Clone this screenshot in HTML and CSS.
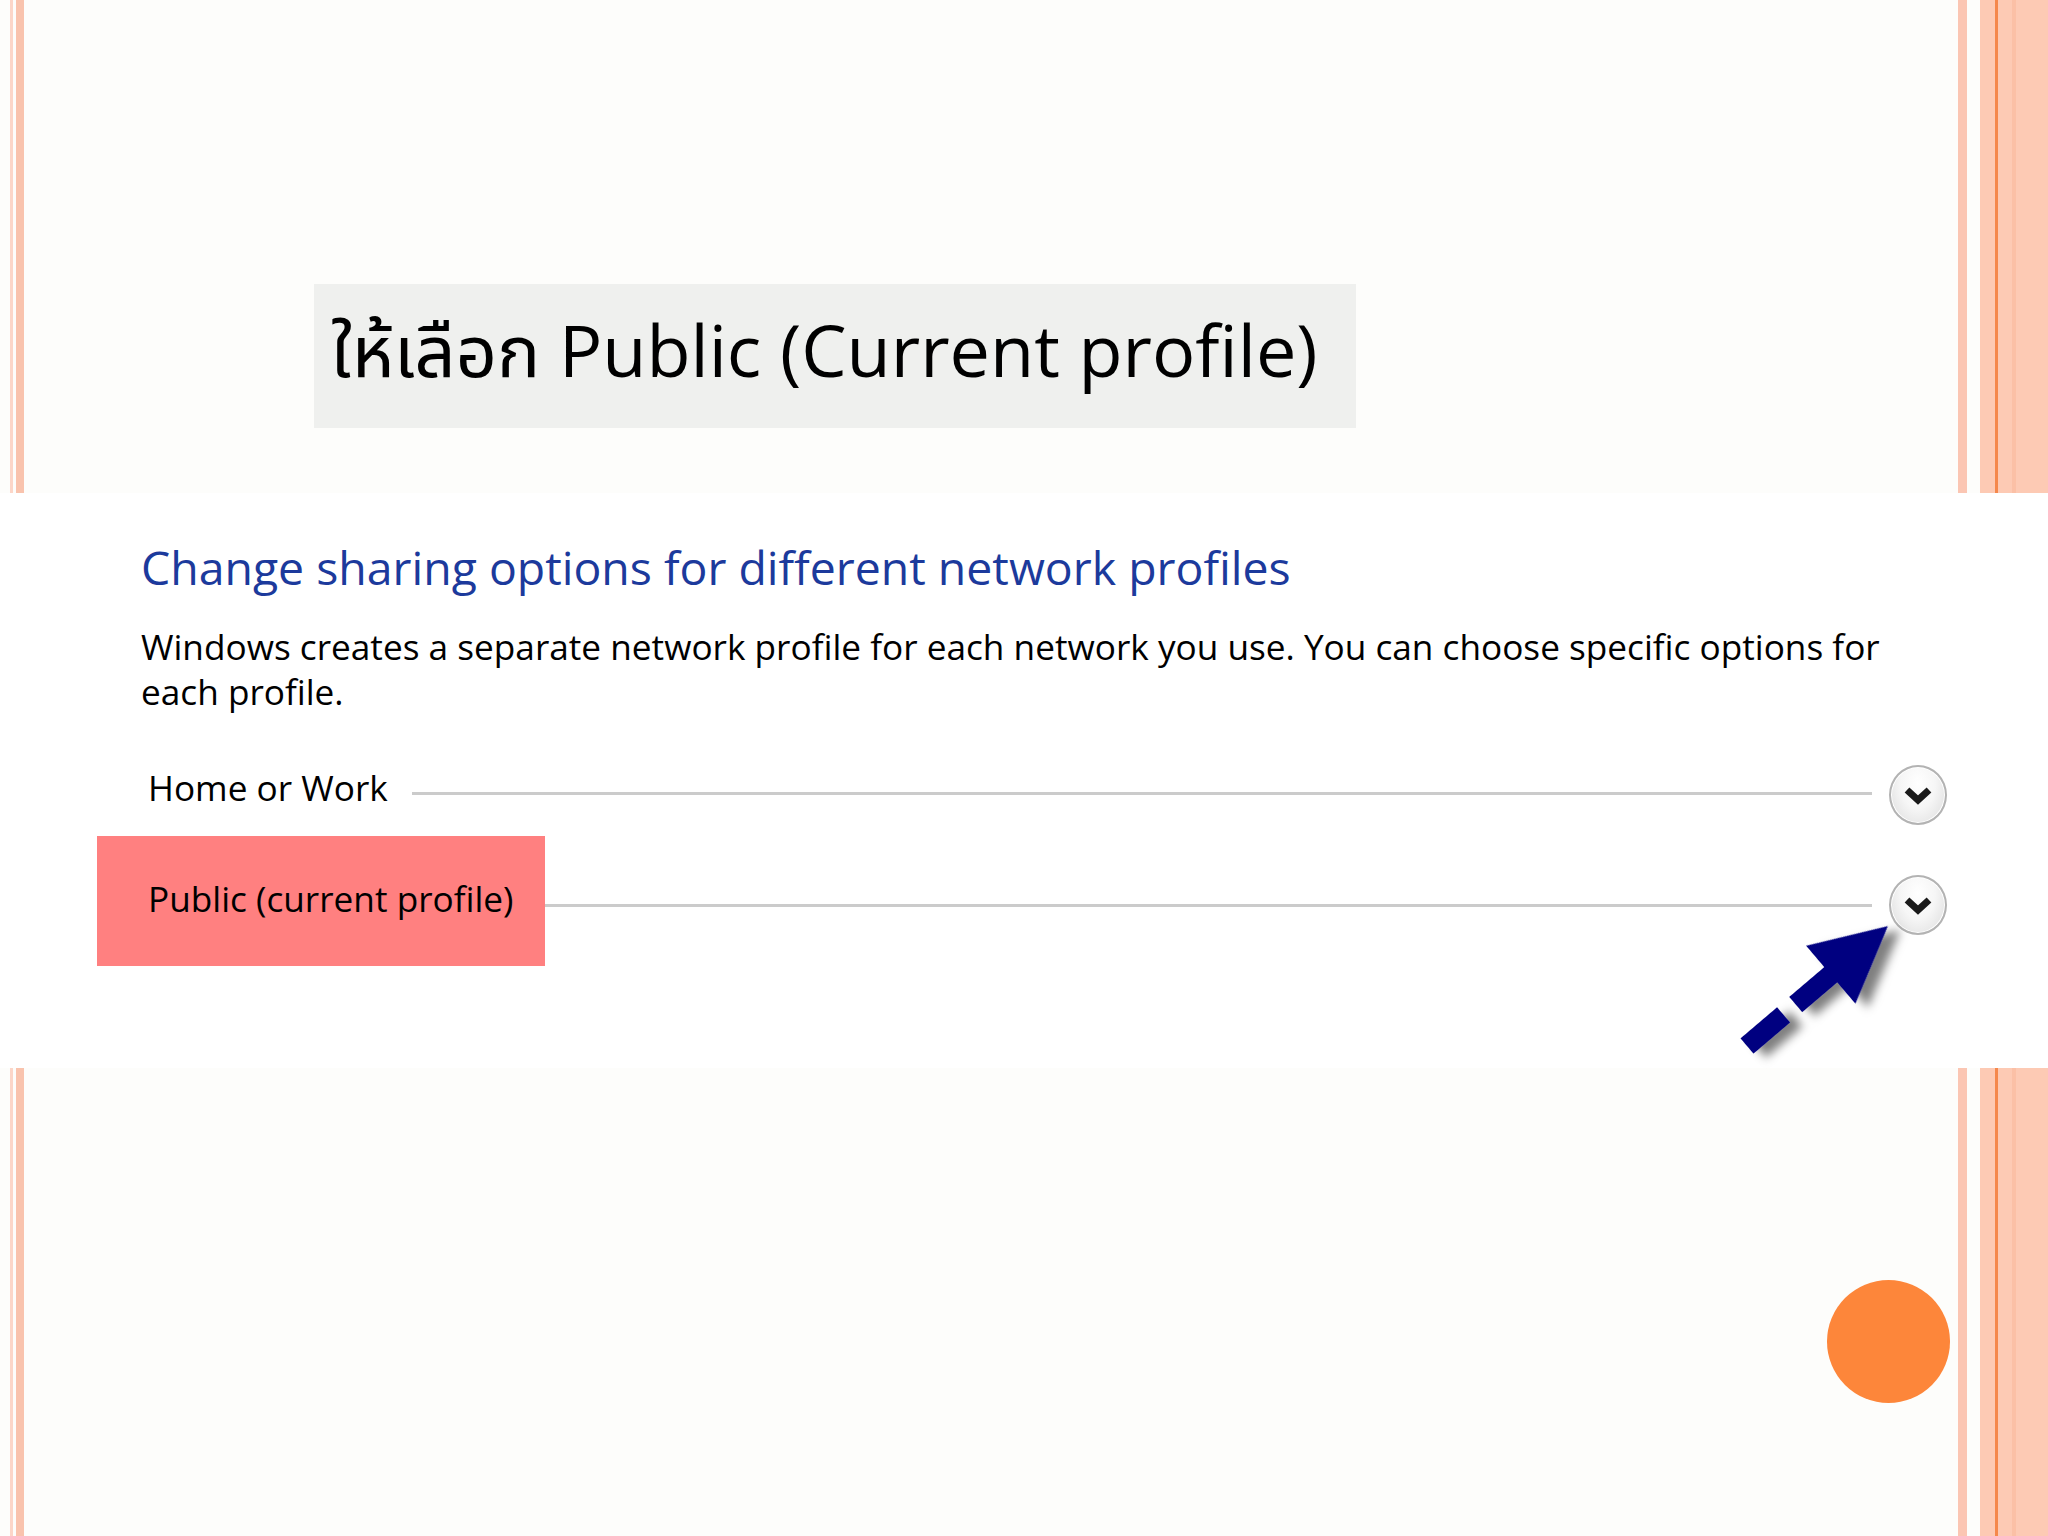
FILE: index.html
```html
<!DOCTYPE html>
<html lang="th">
<head>
<meta charset="utf-8">
<title>Public (Current profile)</title>
<link rel="stylesheet" href="styles.css">
</head>
<body>
<div class="slide">
  <header class="title-wrap">
    <div class="title-box"><h1 class="title">ให้เลือก Public (Current profile)</h1></div>
  </header>

  <section class="shot">
    <h2 class="shot-heading">Change sharing options for different network profiles</h2>
    <p class="shot-text">Windows creates a separate network profile for each network you use. You can choose specific options for<br>each profile.</p>

    <div class="profile-row row-home">
      <span class="profile-label">Home or Work</span>
      <span class="rule"></span>
      <span class="chev"><svg viewBox="0 0 28 18" width="28" height="18"><path d="M3 3 L14 13 L25 3" fill="none" stroke="#1a1a1a" stroke-width="7" stroke-linejoin="miter"/></svg></span>
    </div>

    <div class="profile-row row-public">
      <span class="profile-hl"><span class="profile-label">Public (current profile)</span></span>
      <span class="rule"></span>
      <span class="chev"><svg viewBox="0 0 28 18" width="28" height="18"><path d="M3 3 L14 13 L25 3" fill="none" stroke="#1a1a1a" stroke-width="7" stroke-linejoin="miter"/></svg></span>
    </div>

    <svg class="pointer" viewBox="0 0 210 175" width="210" height="175">
      <defs>
        <filter id="sh" x="-30%" y="-30%" width="170%" height="170%">
          <feDropShadow dx="7" dy="11" stdDeviation="5" flood-color="#000" flood-opacity="0.5"/>
        </filter>
      </defs>
      <g transform="translate(37 146) rotate(-40.4)" fill="#000080" filter="url(#sh)">
        <rect x="0" y="-10" width="48" height="20"/>
        <rect x="64" y="-10" width="52" height="20"/>
        <polygon points="110,-38 185,0 110,38"/>
      </g>
    </svg>
  </section>

  <div class="bullet"></div>
</div>
</body>
</html>
```

FILE: styles.css
```css
html, body {
  margin: 0;
  padding: 0;
}

body {
  width: 2048px;
  height: 1536px;
  overflow: hidden;
  background-color: #fdfdfb;
  background-image: linear-gradient(to right,
    transparent 10px, #fcd6c8 10px, #fcd6c8 13px, transparent 13px,
    transparent 16px, #f9c3ad 16px, #f9c3ad 24px, transparent 24px,
    transparent 1958px, #fbc6b3 1958px, #fbc6b3 1967px, transparent 1967px,
    transparent 1980px, #fdcab4 1980px, #fdcab4 1995px, #f5884c 1995px,
    #f5884c 1998px, #fdcab4 1998px, #fdcab4 2012px, #fbc0a6 2012px,
    #fbc0a6 2016px, #fdcab4 2016px);
  font-family: "Open Sans", "Noto Sans", "Noto Sans Thai", sans-serif;
}

.slide {
  display: flex;
  flex-direction: column;
  padding-top: 284px;
}

.title-wrap {
  padding-left: 314px;
}

.title-box {
  width: 1042px;
  height: 144px;
  box-sizing: border-box;
  background: #eff0ee;
  display: flex;
  align-items: center;
  padding-left: 17px;
  padding-bottom: 14px;
}

.title {
  margin: 0;
  font-weight: 400;
  font-size: 72px;
  line-height: 90px;
  color: #000;
  white-space: nowrap;
  font-family: "Open Sans", "Noto Sans Thai", "Noto Sans", "Loma", "Garuda", sans-serif;
}

.shot {
  position: relative;
  margin-top: 65px;
  height: 575px;
  box-sizing: border-box;
  background: #ffffff;
  padding-top: 44px;
}

.shot-heading {
  margin: 0 0 0 141px;
  font-weight: 400;
  font-size: 46.4px;
  line-height: 60px;
  color: #1c3a9c;
  white-space: nowrap;
}

.shot-text {
  margin: 27px 0 0 141px;
  font-size: 35.2px;
  line-height: 45px;
  color: #000;
  white-space: nowrap;
}

.profile-row {
  display: flex;
  align-items: center;
  padding-right: 101px;
}

.row-home {
  margin-top: 51px;
  height: 60px;
  padding-left: 148px;
}

.row-home .profile-label {
  margin-bottom: 15px;
  margin-right: 24px;
}

.row-public {
  margin-top: 11px;
  height: 130px;
  padding-left: 97px;
}

.profile-label {
  font-size: 35.2px;
  line-height: 45px;
  color: #000;
  white-space: nowrap;
}

.profile-hl {
  width: 448px;
  height: 130px;
  box-sizing: border-box;
  background: #ff8080;
  display: flex;
  align-items: center;
  padding-left: 51px;
  padding-bottom: 5px;
  flex: none;
}

.rule {
  flex: 1;
  height: 3px;
  background: #cbcbcb;
  margin-right: 17px;
  margin-bottom: 4px;
}

.row-public .rule {
  margin-bottom: 0;
  margin-top: 8px;
}

.chev {
  flex: none;
  width: 58px;
  height: 60px;
  box-sizing: border-box;
  border-radius: 50%;
  border: 2px solid #b3b3b3;
  background: radial-gradient(ellipse at 50% 30%, #ffffff 0%, #f6f6f6 45%, #dadada 100%);
  box-shadow: inset 0 0 0 1px #ffffff;
  display: flex;
  align-items: center;
  justify-content: center;
}

.row-public .chev {
  margin-top: 8px;
}

.chev svg {
  display: block;
  margin-top: 2px;
}

.pointer {
  position: absolute;
  left: 1710px;
  top: 407px;
}

.bullet {
  margin-top: 212px;
  margin-left: 1827px;
  width: 123px;
  height: 123px;
  border-radius: 50%;
  background: #fd863a;
}
```
